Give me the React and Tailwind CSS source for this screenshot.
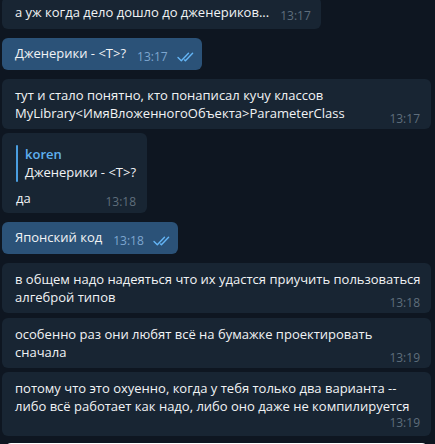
import React from 'react'

const FONT = { fontFamily: '"Open Sans", "Noto Sans", sans-serif' }

function Checks() {
  return (
    <svg width="17" height="10" viewBox="0 0 17 10" fill="none" className="shrink-0">
      <path d="M1 5.5 L4.3 8.8 L11.5 1.2" stroke="#64b5f6" strokeWidth="1.4" strokeLinecap="round" strokeLinejoin="round" />
      <path d="M7.6 8 L8.4 8.8 L15.6 1.2" stroke="#64b5f6" strokeWidth="1.4" strokeLinecap="round" strokeLinejoin="round" />
    </svg>
  )
}

function Time({ value, out }) {
  return (
    <span className={`block text-[12px] leading-[16px] ${out ? 'text-[#7ea6cf]' : 'text-[#5f6e7c]'}`}>
      {value}
    </span>
  )
}

function ShortBubble({ text, time, out, className = '' }) {
  return (
    <div
      className={`flex items-end self-start rounded-[6px] pl-[13px] pt-[6px] pb-[7px] ${
        out ? 'bg-[#2b5278] pr-[8px]' : 'bg-[#182533] pr-[10px]'
      } ${className}`}
    >
      <span className="whitespace-nowrap leading-[19px] text-[#f1f3f5]">{text}</span>
      <span className="ml-[11px] flex items-center gap-[9px] relative top-[2px]">
        <Time value={time} out={out} />
        {out && <Checks />}
      </span>
    </div>
  )
}

function LongBubble({ lines, time, ownLine, className = '' }) {
  return (
    <div className={`rounded-[6px] bg-[#182533] pl-[13px] pr-[11px] pt-[7px] ${ownLine ? 'pb-[5px]' : 'pb-[7px]'} ${className}`}>
      {lines.slice(0, ownLine ? lines.length : lines.length - 1).map((l) => (
        <div key={l} className="whitespace-nowrap text-[#f1f3f5]">
          {l}
        </div>
      ))}
      {ownLine ? (
        <div className="flex justify-end">
          <Time value={time} />
        </div>
      ) : (
        <div className="flex items-end justify-between">
          <span className="whitespace-nowrap text-[#f1f3f5]">{lines[lines.length - 1]}</span>
          <span className="relative top-[5px]">
            <Time value={time} />
          </span>
        </div>
      )}
    </div>
  )
}

export default function App() {
  return (
    <div className="h-[444px] w-[435px] overflow-hidden bg-[#0e1621] text-[13px] leading-[18px]" style={FONT}>
      <div className="flex flex-col pl-[2px] pr-[4px] mt-[-3px]">
        <ShortBubble text="а уж когда дело дошло до дженериков..." time="13:17" />
        <ShortBubble text="Дженерики - <T>?" time="13:17" out className="mt-[9px]" />
        <LongBubble
          className="mt-[9px]"
          lines={[
            'тут и стало понятно, кто понаписал кучу классов',
            'MyLibrary<ИмяВложенногоОбъекта>ParameterClass',
          ]}
          time="13:17"
        />

        <div className="mt-[4px] self-start rounded-[6px] bg-[#182533] pl-[14px] pr-[11px] pt-[12px] pb-[6px]">
          <div className="flex">
            <div className="w-[2px] rounded-full bg-[#4a9ee0]" />
            <div className="pl-[7px]">
              <div className="text-[#5fb0f0] font-semibold">koren</div>
              <div className="whitespace-nowrap leading-[19px] text-[#f1f3f5]">Дженерики - &lt;T&gt;?</div>
            </div>
          </div>
          <div className="mt-[7px] flex items-end justify-between">
            <span className="text-[#f1f3f5]">да</span>
            <span className="relative top-[3px] ml-[14px]">
              <Time value="13:18" />
            </span>
          </div>
        </div>

        <ShortBubble text="Японский код" time="13:18" out className="mt-[9px]" />

        <LongBubble
          className="mt-[9px]"
          lines={['в общем надо надеяться что их удастся приучить пользоваться', 'алгеброй типов']}
          time="13:18"
        />
        <LongBubble
          className="mt-[5px]"
          lines={['особенно раз они любят всё на бумажке проектировать', 'сначала']}
          time="13:19"
        />
        <LongBubble
          className="mt-[4px]"
          ownLine
          lines={[
            'потому что это охуенно, когда у тебя только два варианта --',
            'либо всё работает как надо, либо оно даже не компилируется',
          ]}
          time="13:19"
        />
        <div className="mt-[7px] mx-[3px] h-[20px] rounded-[6px] bg-white" />
      </div>
    </div>
  )
}
